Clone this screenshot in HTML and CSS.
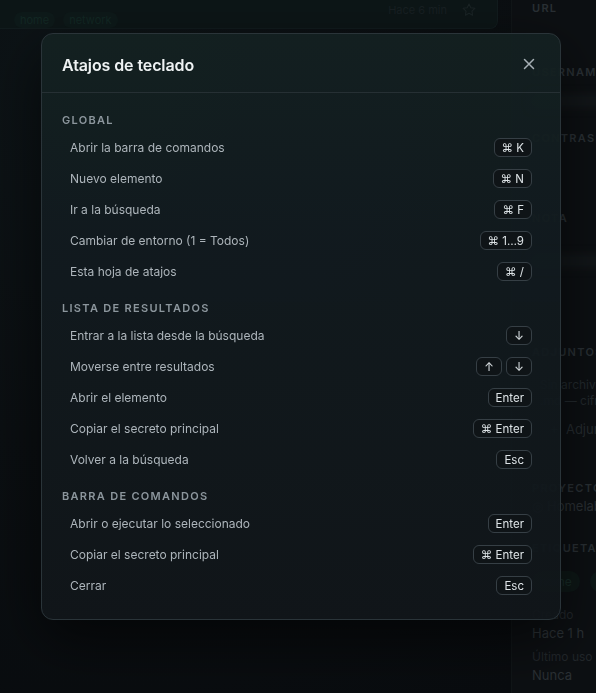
FILE: index.html
```html
<!DOCTYPE html>
<html lang="es">
<head>
<meta charset="utf-8">
<title>Atajos de teclado</title>
<link rel="stylesheet" href="styles.css">
</head>
<body>
<div class="app">
  <main class="list">
    <div class="card">
      <div class="card-title">Home router</div>
      <div class="card-tags"><span class="tag">home</span><span class="tag">network</span></div>
      <div class="card-meta"><span>Hace 6 min</span>
        <svg class="star" viewBox="0 0 24 24" width="16" height="16"><path d="M12 3l2.7 5.6 6.1.9-4.4 4.3 1 6.1L12 17l-5.4 2.9 1-6.1-4.4-4.3 6.1-.9z" fill="none" stroke="currentColor" stroke-width="1.6" stroke-linejoin="round"/></svg>
      </div>
    </div>
  </main>
  <aside class="detail">
    <div class="field f-url"><div class="lbl">URL</div></div>
    <div class="field f-user"><div class="lbl">USERNAME</div><div class="blurbar"></div></div>
    <div class="field f-pass"><div class="lbl">CONTRASEÑA</div></div>
    <div class="field f-note"><div class="lbl">NOTA</div><div class="blurbar wide"></div></div>
    <div class="field f-att"><div class="lbl">ADJUNTOS</div>
      <div class="val small">Sin archivos<br>.md — cifrados</div>
      <div class="val add">+&nbsp;&nbsp;Adjuntar</div>
    </div>
    <div class="field f-proj"><div class="lbl">PROYECTO</div><div class="val">◎ Homelab</div></div>
    <div class="field f-tags"><div class="lbl">ETIQUETAS</div>
      <div class="dtags"><span class="dtag">home</span><span class="dtag">network</span></div>
    </div>
    <div class="field f-meta"><div class="mlbl">Creado</div><div class="val">Hace 1 h</div></div>
    <div class="field f-meta2"><div class="mlbl">Último uso</div><div class="val">Nunca</div></div>
  </aside>
</div>

<div class="modal" role="dialog" aria-label="Atajos de teclado">
  <header class="modal-head">
    <h2>Atajos de teclado</h2>
    <button class="close" aria-label="Cerrar">
      <svg viewBox="0 0 14 14" width="14" height="14"><path d="M2.5 2.5l9 9M11.5 2.5l-9 9" stroke="currentColor" stroke-width="1.5" stroke-linecap="round"/></svg>
    </button>
  </header>
  <div class="modal-body">
    <section class="group">
      <h3>GLOBAL</h3>
      <div class="row"><span>Abrir la barra de comandos</span><span class="keys"><kbd>⌘ K</kbd></span></div>
      <div class="row"><span>Nuevo elemento</span><span class="keys"><kbd>⌘ N</kbd></span></div>
      <div class="row"><span>Ir a la búsqueda</span><span class="keys"><kbd>⌘ F</kbd></span></div>
      <div class="row"><span>Cambiar de entorno (1 = Todos)</span><span class="keys"><kbd>⌘ 1…9</kbd></span></div>
      <div class="row"><span>Esta hoja de atajos</span><span class="keys"><kbd>⌘ /</kbd></span></div>
    </section>
    <section class="group">
      <h3>LISTA DE RESULTADOS</h3>
      <div class="row"><span>Entrar a la lista desde la búsqueda</span><span class="keys"><kbd class="arrow">↓</kbd></span></div>
      <div class="row"><span>Moverse entre resultados</span><span class="keys"><kbd class="arrow">↑</kbd><kbd class="arrow">↓</kbd></span></div>
      <div class="row"><span>Abrir el elemento</span><span class="keys"><kbd>Enter</kbd></span></div>
      <div class="row"><span>Copiar el secreto principal</span><span class="keys"><kbd>⌘ Enter</kbd></span></div>
      <div class="row"><span>Volver a la búsqueda</span><span class="keys"><kbd>Esc</kbd></span></div>
    </section>
    <section class="group">
      <h3>BARRA DE COMANDOS</h3>
      <div class="row"><span>Abrir o ejecutar lo seleccionado</span><span class="keys"><kbd>Enter</kbd></span></div>
      <div class="row"><span>Copiar el secreto principal</span><span class="keys"><kbd>⌘ Enter</kbd></span></div>
      <div class="row"><span>Cerrar</span><span class="keys"><kbd>Esc</kbd></span></div>
    </section>
  </div>
</div>
</body>
</html>
```

FILE: styles.css
```css
* { box-sizing: border-box; }
html, body {
  margin: 0;
  height: 100%;
  background: #0a0d10;
  font-family: Inter, "Noto Sans", "DejaVu Sans", sans-serif;
  overflow: hidden;
}
.app {
  display: flex;
  height: 693px;
}
.list {
  flex: 0 0 510px;
  background: radial-gradient(circle at 20% 10%, #0d1417 0%, #0b0f12 50%, #090c0f 100%);
  padding: 0 13px 0 0;
}
.card {
  position: relative;
  height: 41px;
  margin-top: -12px;
  background: #0d1617;
  border: 1px solid #121c1e;
  border-top: none;
  border-left: none;
  border-radius: 0 0 8px 0;
  width: 498px;
}
.card-title {
  position: absolute;
  left: 14px;
  top: -2px;
  font-size: 14px;
  font-weight: 600;
  color: #1a2224;
}
.card-tags {
  display: flex;
  gap: 8px;
  position: absolute;
  left: 14px;
  top: 24px;
}
.tag {
  font-size: 11px;
  color: #132824;
  background: #0e1a1a;
  padding: 1px 6px;
  border-radius: 10px;
}
.card-meta {
  position: absolute;
  right: 20px;
  top: 14px;
  display: flex;
  align-items: center;
  gap: 14px;
  font-size: 11px;
  color: #182023;
}
.star { color: #1b2426; }
.detail {
  flex: 1;
  background: #0d1013;
  border-left: 1px solid #111618;
  padding-left: 20px;
  position: relative;
}
.field { position: absolute; left: 20px; }
.lbl {
  font-size: 11px;
  font-weight: 600;
  letter-spacing: 1.3px;
  color: #2a3035;
  white-space: nowrap;
}
.val {
  font-size: 13px;
  color: #2b3135;
  white-space: nowrap;
  margin-top: 3px;
}
.val.small { font-size: 12px; color: #232a2e; line-height: 16px; margin-top: 18px; margin-left: 8px; }
.val.add { margin-top: 12px; margin-left: 18px; color: #262c30; }
.mlbl { font-size: 12px; color: #22272b; white-space: nowrap; }
.blurbar {
  width: 90px;
  height: 12px;
  margin-top: 16px;
  background: #14181b;
  filter: blur(5px);
}
.blurbar.wide { margin-top: 30px; }
.f-url { top: 1px; }
.f-user { top: 65px; }
.f-pass { top: 131px; }
.f-note { top: 211px; }
.f-att { top: 345px; }
.f-proj { top: 481px; }
.f-tags { top: 541px; }
.f-meta { top: 607px; }
.f-meta2 { top: 649px; }
.dtags { display: flex; gap: 10px; margin-top: 16px; }
.dtag {
  font-size: 12px;
  color: #182c28;
  background: #0e1817;
  padding: 3px 8px;
  border-radius: 12px;
  white-space: nowrap;
}

/* Modal */
.modal {
  position: fixed;
  left: 41px;
  top: 33px;
  width: 520px;
  height: 587px;
  border: 1px solid #2a3439;
  border-radius: 12px;
  background: linear-gradient(180deg, rgba(20, 33, 33, 0.95) 0%, rgba(18, 27, 31, 0.95) 35%, rgba(17, 22, 26, 0.96) 100%);
  box-shadow: 0 20px 60px rgba(0, 0, 0, 0.6);
  color: #aeb6bc;
}
.modal-head {
  display: flex;
  align-items: center;
  justify-content: space-between;
  height: 59px;
  padding: 4px 20px 0;
  border-bottom: 1px solid #263034;
}
.modal-head h2 {
  margin: 0;
  font-size: 16px;
  font-weight: 600;
  color: #eef2f3;
  letter-spacing: -0.1px;
}
.close {
  background: none;
  border: none;
  padding: 0;
  margin-right: 4px;
  margin-top: -3px;
  color: #a7b0b6;
  display: flex;
  cursor: pointer;
}
.modal-body {
  padding: 20px 20px 0;
  display: flex;
  flex-direction: column;
  gap: 14px;
}
.group h3 {
  margin: 0 0 5px;
  font-size: 11px;
  line-height: 14px;
  font-weight: 600;
  letter-spacing: 1.3px;
  color: #8c969d;
}
.row {
  display: flex;
  align-items: center;
  justify-content: space-between;
  height: 31px;
  padding: 0 8px;
  font-size: 12px;
  color: #adb5bb;
}
.keys { display: flex; gap: 4px; }
kbd {
  display: inline-flex;
  align-items: center;
  justify-content: center;
  height: 19px;
  min-width: 26px;
  padding: 0 7px;
  border: 1px solid #363f45;
  border-radius: 6px;
  background: #0f1417;
  font-family: Inter, "DejaVu Sans", sans-serif;
  font-size: 11.5px;
  color: #dde3e6;
  white-space: nowrap;
}
kbd.arrow { padding: 0; width: 26px; }
```
